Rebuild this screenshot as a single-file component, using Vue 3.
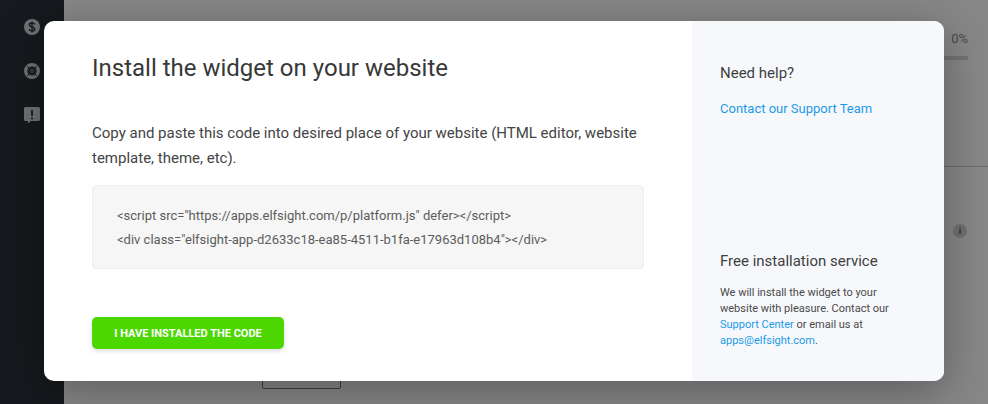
<script setup>
const code = [
  '<script src="https://apps.elfsight.com/p/platform.js" defer></' + 'script>',
  '<div class="elfsight-app-d2633c18-ea85-4511-b1fa-e17963d108b4"></div>'
]
</script>

<template>
  <div class="page">
    <aside class="sidebar">
      <svg class="side-icon" viewBox="0 0 16 16">
        <circle cx="8" cy="8" r="8" fill="#6f7174" />
        <path d="M10.800 5.600C10.400 4.500 9.300 4 8 4 6.500 4 5.300 4.700 5.300 6S6.500 7.600 8 8s2.800.8 2.800 2.100S9.500 12 8 12c-1.400 0-2.500-.6-2.900-1.700M8 2.600v10.800" fill="none" stroke="#16191d" stroke-width="1.400" />
      </svg>
      <svg class="side-icon" viewBox="0 0 16 16">
        <circle cx="8" cy="8" r="6.300" fill="none" stroke="#6f7174" stroke-width="3.400" />
        <circle cx="8" cy="8" r="3.700" fill="#1b1e22" />
        <circle cx="8" cy="8" r="2.400" fill="#303337" />
        <path d="M3 3l2.500 2.500M13 3l-2.500 2.500M3 13l2.500-2.500M13 13l-2.500-2.500" stroke="#16191d" stroke-width="1" />
      </svg>
      <svg class="side-icon" viewBox="0 0 16 16">
        <path d="M1.500 0h13A1.500 1.500 0 0 1 16 1.500v11a1.500 1.500 0 0 1-1.500 1.500H7L4 16.500V14H1.500A1.500 1.500 0 0 1 0 12.500v-11A1.500 1.500 0 0 1 1.500 0z" fill="#6f7174" />
        <path d="M8 3v6M8 10.500v1.800" stroke="#16191d" stroke-width="1.800" />
      </svg>
    </aside>
    <main class="backdrop">
      <div class="progress">
        <span class="percent">0%</span>
        <span class="track"></span>
      </div>
      <div class="divider"></div>
      <span class="info">i</span>
      <span class="field"></span>
    </main>

    <section class="modal">
      <div class="content">
        <h1 class="title">Install the widget on your website</h1>
        <p class="lead">Copy and paste this code into desired place of your website (HTML editor, website template, theme, etc).</p>
        <div class="code">
          <div v-for="line in code" :key="line" class="code-line">{{ line }}</div>
        </div>
        <button class="install" type="button">I HAVE INSTALLED THE CODE</button>
      </div>
      <div class="help">
        <div>
          <h2 class="help-title">Need help?</h2>
          <a class="support" href="#">Contact our Support Team</a>
        </div>
        <div>
          <h2 class="help-title service">Free installation service</h2>
          <p class="service-text">We will install the widget to your website with pleasure. Contact our <a href="#">Support Center</a> or email us at <a href="#">apps@elfsight.com</a>.</p>
        </div>
      </div>
    </section>
  </div>
</template>

<style>
html, body { margin: 0; background: #808080; }
</style>

<style scoped>
* { box-sizing: border-box; }
.page {
  position: relative;
  width: 988px;
  height: 404px;
  display: flex;
  overflow: hidden;
  font-family: Roboto, "Liberation Sans", sans-serif;
}
.sidebar {
  width: 64px;
  flex: none;
  background: #16191d;
  display: flex;
  flex-direction: column;
  align-items: center;
  gap: 28px;
  padding-top: 19px;
  position: relative;
  z-index: 1;
}
.side-icon { width: 16px; height: 16px; flex: none; overflow: visible; }
.backdrop {
  position: relative;
  flex: 1;
  background: #878787;
}
.progress {
  position: absolute;
  top: 31px;
  left: 880px;
  width: 24px;
  display: flex;
  flex-direction: column;
  align-items: flex-end;
  gap: 10px;
}
.percent { font-size: 13px; line-height: 15px; color: #474747; }
.track { width: 100%; height: 4px; background: #737373; }
.divider {
  position: absolute;
  top: 166px;
  left: 0;
  right: 0;
  height: 1px;
  background: #6c6c6c;
}
.info {
  position: absolute;
  top: 223px;
  left: 888px;
  width: 14px;
  height: 14px;
  margin: 1px;
  border-radius: 50%;
  background: #707070;
  color: #333;
  font-size: 9px;
  font-weight: 700;
  line-height: 14px;
  text-align: center;
}
.field {
  position: absolute;
  top: 360px;
  left: 198px;
  width: 79px;
  height: 29px;
  border: 1px solid #3d3d3d;
  border-radius: 2px;
}
.modal {
  position: absolute;
  left: 44px;
  top: 21px;
  width: 900px;
  height: 360px;
  display: flex;
  border-radius: 10px;
  overflow: hidden;
  background: #fff;
  box-shadow: 0 10px 45px rgba(0, 0, 0, 0.32);
  z-index: 2;
}
.content {
  width: 648px;
  flex: none;
  padding: 32px 48px 0;
}
.title {
  margin: 0;
  font-size: 24px;
  font-weight: 400;
  line-height: 30px;
  color: #383838;
}
.lead {
  margin: 38px 0 0;
  font-size: 15px;
  line-height: 25px;
  color: #444;
}
.code {
  margin-top: 14px;
  height: 84px;
  padding: 18px 24px;
  background: #f6f6f6;
  border: 1px solid #eeeeee;
  border-radius: 4px;
}
.code-line {
  font-size: 13px;
  line-height: 24px;
  white-space: nowrap;
  color: #5c5c5c;
}
.install {
  display: block;
  margin-top: 48px;
  width: 192px;
  height: 32px;
  padding: 0;
  border: 0;
  border-radius: 5px;
  background: #4cd700;
  box-shadow: 0 2px 5px rgba(0, 0, 0, 0.14);
  color: #fff;
  font-family: inherit;
  font-size: 11px;
  font-weight: 700;
}
.help {
  flex: 1;
  background: #f6f8fc;
  padding: 42px 28px 32px;
  display: flex;
  flex-direction: column;
  justify-content: space-between;
}
.help-title {
  margin: 0;
  font-size: 15px;
  font-weight: 400;
  line-height: 20px;
  color: #3f3f3f;
}
.support {
  display: block;
  margin-top: 16px;
  font-size: 13px;
  line-height: 20px;
  color: #1c9be6;
  text-decoration: none;
}
.service-text {
  margin: 14px 0 0;
  font-size: 11px;
  line-height: 16px;
  color: #4a4a4a;
}
.service-text a { color: #1c9be6; text-decoration: none; }
</style>
